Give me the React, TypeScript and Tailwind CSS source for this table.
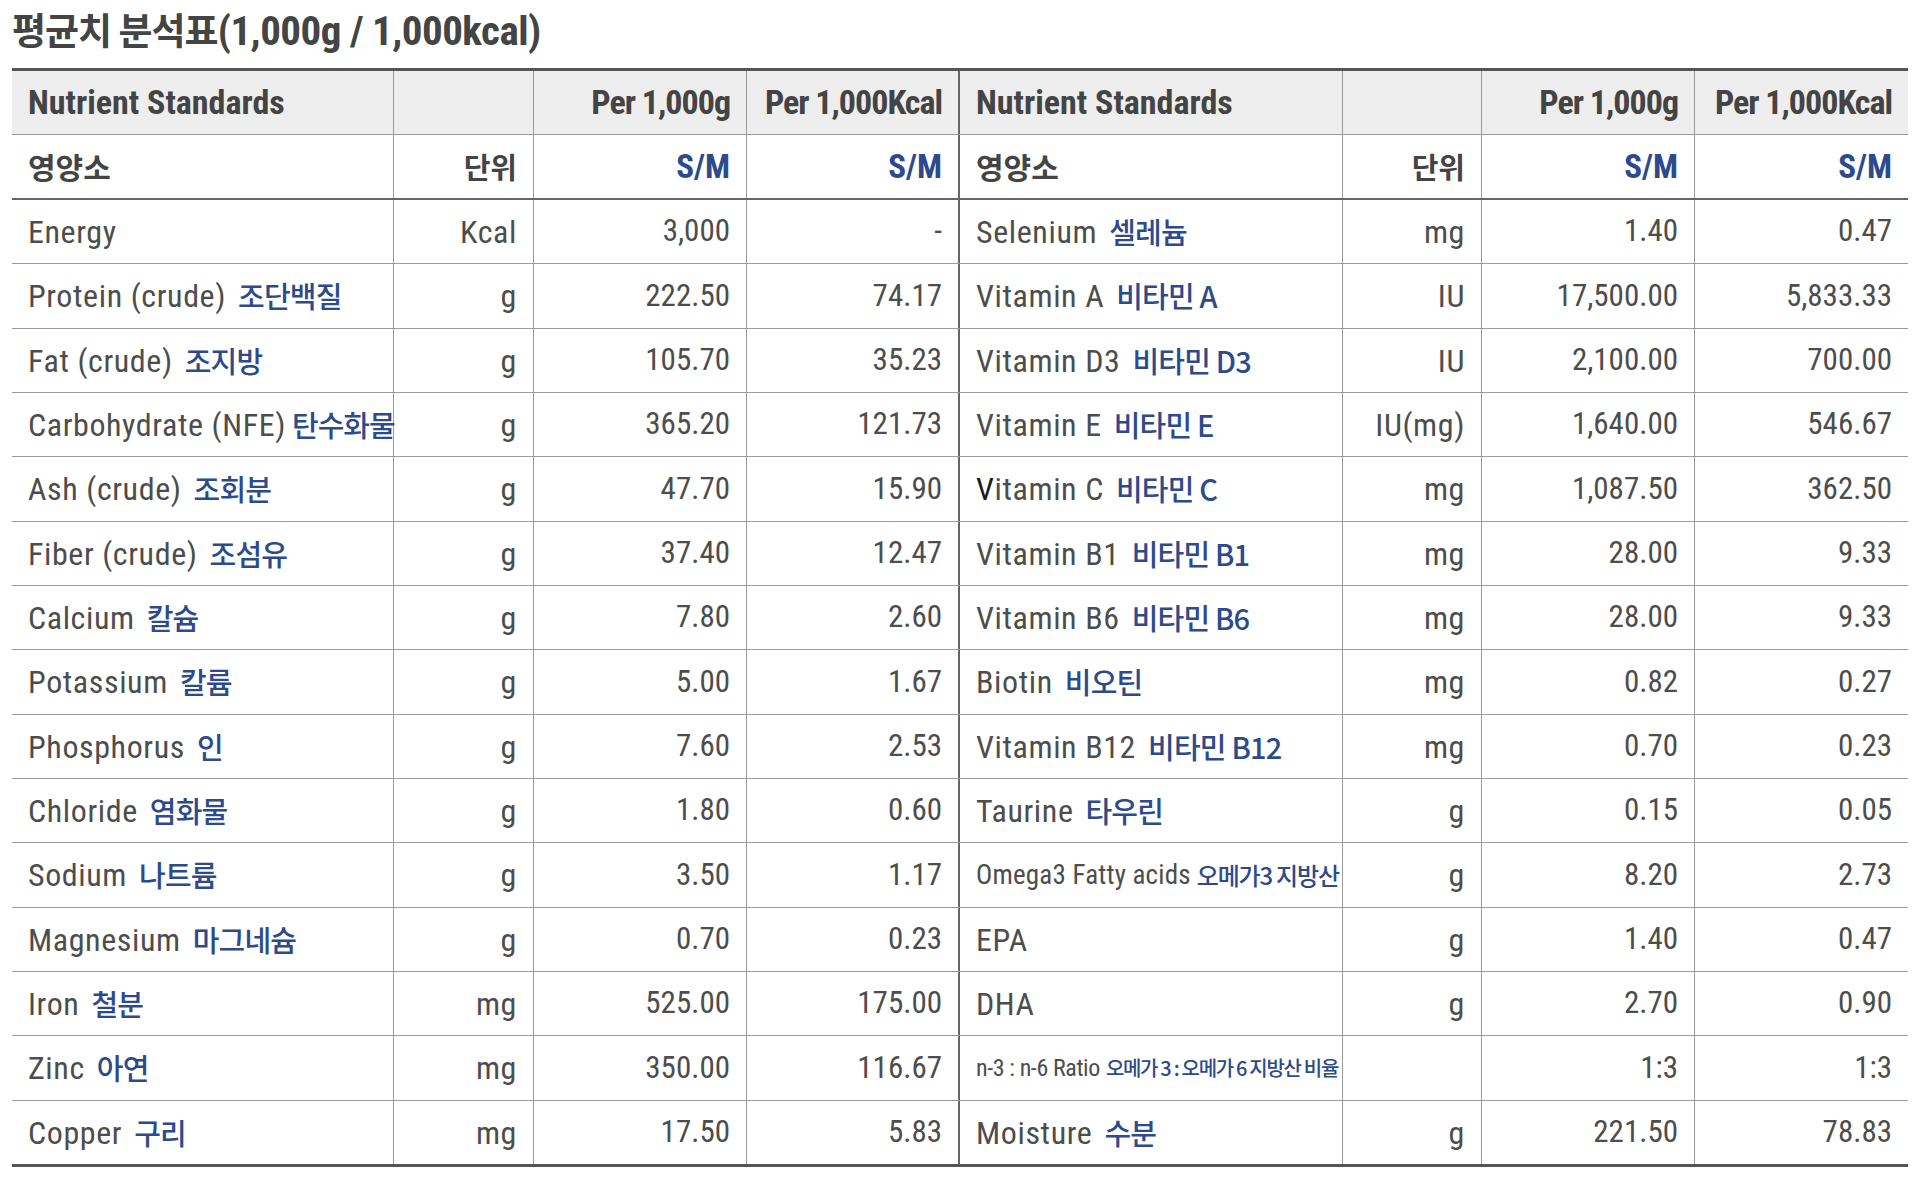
type Row = {
  en: string;
  ko?: string;
  unit: string;
  perG: string;
  perKcal: string;
  small?: "omega" | "ratio";
  darkFirst?: boolean;
  tight?: boolean;
};

const LEFT: Row[] = [
  { en: "Energy", unit: "Kcal", perG: "3,000", perKcal: "-" },
  { en: "Protein (crude)", ko: "조단백질", unit: "g", perG: "222.50", perKcal: "74.17" },
  { en: "Fat (crude)", ko: "조지방", unit: "g", perG: "105.70", perKcal: "35.23" },
  { en: "Carbohydrate (NFE)", ko: "탄수화물", unit: "g", perG: "365.20", perKcal: "121.73", tight: true },
  { en: "Ash (crude)", ko: "조회분", unit: "g", perG: "47.70", perKcal: "15.90" },
  { en: "Fiber (crude)", ko: "조섬유", unit: "g", perG: "37.40", perKcal: "12.47" },
  { en: "Calcium", ko: "칼슘", unit: "g", perG: "7.80", perKcal: "2.60" },
  { en: "Potassium", ko: "칼륨", unit: "g", perG: "5.00", perKcal: "1.67" },
  { en: "Phosphorus", ko: "인", unit: "g", perG: "7.60", perKcal: "2.53" },
  { en: "Chloride", ko: "염화물", unit: "g", perG: "1.80", perKcal: "0.60" },
  { en: "Sodium", ko: "나트륨", unit: "g", perG: "3.50", perKcal: "1.17" },
  { en: "Magnesium", ko: "마그네슘", unit: "g", perG: "0.70", perKcal: "0.23" },
  { en: "Iron", ko: "철분", unit: "mg", perG: "525.00", perKcal: "175.00" },
  { en: "Zinc", ko: "아연", unit: "mg", perG: "350.00", perKcal: "116.67" },
  { en: "Copper", ko: "구리", unit: "mg", perG: "17.50", perKcal: "5.83" },
];

const RIGHT: Row[] = [
  { en: "Selenium", ko: "셀레늄", unit: "mg", perG: "1.40", perKcal: "0.47" },
  { en: "Vitamin A", ko: "비타민 A", unit: "IU", perG: "17,500.00", perKcal: "5,833.33" },
  { en: "Vitamin D3", ko: "비타민 D3", unit: "IU", perG: "2,100.00", perKcal: "700.00" },
  { en: "Vitamin E", ko: "비타민 E", unit: "IU(mg)", perG: "1,640.00", perKcal: "546.67" },
  { en: "Vitamin C", ko: "비타민 C", unit: "mg", perG: "1,087.50", perKcal: "362.50", darkFirst: true },
  { en: "Vitamin B1", ko: "비타민 B1", unit: "mg", perG: "28.00", perKcal: "9.33" },
  { en: "Vitamin B6", ko: "비타민 B6", unit: "mg", perG: "28.00", perKcal: "9.33" },
  { en: "Biotin", ko: "비오틴", unit: "mg", perG: "0.82", perKcal: "0.27" },
  { en: "Vitamin B12", ko: "비타민 B12", unit: "mg", perG: "0.70", perKcal: "0.23" },
  { en: "Taurine", ko: "타우린", unit: "g", perG: "0.15", perKcal: "0.05" },
  { en: "Omega3 Fatty acids", ko: "오메가3 지방산", unit: "g", perG: "8.20", perKcal: "2.73", small: "omega" },
  { en: "EPA", unit: "g", perG: "1.40", perKcal: "0.47" },
  { en: "DHA", unit: "g", perG: "2.70", perKcal: "0.90" },
  { en: "n-3 : n-6 Ratio", ko: "오메가 3 : 오메가 6 지방산 비율", unit: "", perG: "1:3", perKcal: "1:3", small: "ratio" },
  { en: "Moisture", ko: "수분", unit: "g", perG: "221.50", perKcal: "78.83" },
];

const GRID = "grid grid-cols-[382px_140px_213px_213px_383px_139px_213px_213px]";
const CELL = "flex items-center px-4 border-r border-[#9a9a9a] whitespace-nowrap";
const MID = "flex items-center px-4 border-r-2 border-[#666] whitespace-nowrap";
const LAST = "flex items-center px-4 whitespace-nowrap";
const KR = "font-['Noto_Sans_CJK_KR',sans-serif]";

function Label({ row }: { row: Row }) {
  let enCls = "text-[32px] tracking-[0.6px] text-[#4d4d4d]";
  let koCls = `${KR} ml-[12px] font-medium text-[29px] tracking-[-0.8px] text-[#2c4a8c]`;
  if (row.tight) koCls = `${KR} ml-[6px] font-medium text-[29px] tracking-[-1px] text-[#2c4a8c]`;
  if (row.small === "omega") {
    enCls = "text-[27px] tracking-[0.2px] text-[#4d4d4d]";
    koCls = `${KR} ml-[6px] font-medium text-[24px] tracking-[-1.2px] text-[#2c4a8c]`;
  }
  if (row.small === "ratio") {
    enCls = "text-[24px] tracking-[-0.4px] text-[#4d4d4d]";
    koCls = `${KR} ml-[6px] font-medium text-[20px] tracking-[-1.3px] text-[#2c4a8c]`;
  }
  return (
    <>
      <span className={enCls}>
        {row.darkFirst ? (
          <>
            <span className="text-[#1a1a1a]">{row.en[0]}</span>
            {row.en.slice(1)}
          </>
        ) : (
          row.en
        )}
      </span>
      {row.ko && <span className={koCls}>{row.ko}</span>}
    </>
  );
}

function DataRow({ l, r, i, last }: { l: Row; r: Row; i: number; last: boolean }) {
  let rowCls = `${GRID} h-[64px] border-b border-[#9a9a9a]`;
  if (i % 3 === 1) rowCls = `${GRID} h-[65px] border-b border-[#9a9a9a]`;
  if (last) rowCls = `${GRID} h-[66px] border-b-[3px] border-[#555]`;
  return (
    <div className={rowCls}>
      <div className={CELL}>
        <Label row={l} />
      </div>
      <div className={`${CELL} justify-end text-[32px] tracking-[0.6px]`}>{l.unit}</div>
      <div className={`${CELL} justify-end text-[31px]`}>{l.perG}</div>
      <div className={`${MID} justify-end text-[31px]`}>{l.perKcal}</div>
      <div className={CELL}>
        <Label row={r} />
      </div>
      <div className={`${CELL} justify-end text-[32px] tracking-[0.6px]`}>{r.unit}</div>
      <div className={`${CELL} justify-end text-[31px]`}>{r.perG}</div>
      <div className={`${LAST} justify-end text-[31px]`}>{r.perKcal}</div>
    </div>
  );
}

export default function App() {
  return (
    <div className="w-[1920px] h-[1180px] bg-white pl-[12px] font-['Roboto_Condensed','Noto_Sans_CJK_KR',sans-serif] text-[#4d4d4d]">
      {/* Title */}
      <div className="h-[68px] pt-[5px]">
        <h1 className="flex items-baseline leading-[48px] font-bold text-[#444]">
          <span className={`${KR} text-[37px] tracking-[-1px]`}>평균치 분석표</span>
          <span className="text-[41px] tracking-[-0.5px]">(1,000g / 1,000kcal)</span>
        </h1>
      </div>

      <div className="w-[1896px] border-t-[3px] border-[#555]">
        {/* Header */}
        <div className={`${GRID} h-[64px] bg-[#eeeeee] border-b border-[#9a9a9a] text-[34px] font-bold text-[#444]`}>
          <div className={CELL}>Nutrient Standards</div>
          <div className={CELL} />
          <div className={`${CELL} justify-end tracking-[-1px]`}>Per 1,000g</div>
          <div className={`${MID} justify-end tracking-[-1px]`}>Per 1,000Kcal</div>
          <div className={CELL}>Nutrient Standards</div>
          <div className={CELL} />
          <div className={`${CELL} justify-end tracking-[-1px]`}>Per 1,000g</div>
          <div className={`${LAST} justify-end tracking-[-1px]`}>Per 1,000Kcal</div>
        </div>

        {/* Sub header */}
        <div className={`${GRID} h-[65px] border-b-2 border-[#666] font-bold text-[#444]`}>
          <div className={`${CELL} ${KR} text-[30px]`}>영양소</div>
          <div className={`${CELL} justify-end ${KR} text-[29px]`}>단위</div>
          <div className={`${CELL} justify-end text-[33px] text-[#2c4a8c]`}>S/M</div>
          <div className={`${MID} justify-end text-[33px] text-[#2c4a8c]`}>S/M</div>
          <div className={`${CELL} ${KR} text-[30px]`}>영양소</div>
          <div className={`${CELL} justify-end ${KR} text-[29px]`}>단위</div>
          <div className={`${CELL} justify-end text-[33px] text-[#2c4a8c]`}>S/M</div>
          <div className={`${LAST} justify-end text-[33px] text-[#2c4a8c]`}>S/M</div>
        </div>

        {LEFT.map((l, i) => (
          <DataRow key={l.en} l={l} r={RIGHT[i]} i={i} last={i === LEFT.length - 1} />
        ))}
      </div>
    </div>
  );
}
